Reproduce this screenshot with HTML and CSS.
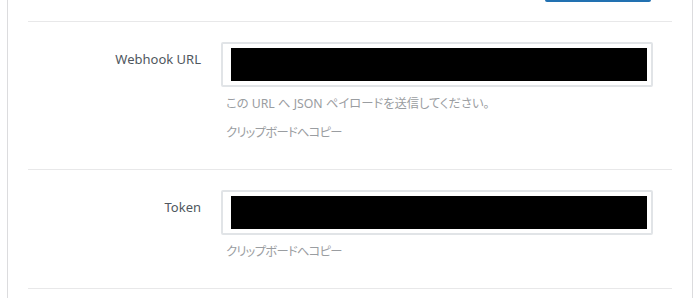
FILE: index.html
```html
<!DOCTYPE html>
<html lang="ja">
<head>
<meta charset="utf-8">
<title>Webhook</title>
<link rel="stylesheet" href="styles.css">
</head>
<body>
<div class="card">
  <div class="toolbar">
    <div class="spacer"></div>
    <div class="tool-field"><span class="btn-edge"></span></div>
  </div>
  <div class="row">
    <div class="label">Webhook URL</div>
    <div class="field">
      <div class="input"><div class="redact"></div></div>
      <p class="help">この URL へ JSON ペイロードを送信してください。</p>
      <p class="copy">クリップボードへコピー</p>
    </div>
  </div>
  <div class="row">
    <div class="label">Token</div>
    <div class="field">
      <div class="input"><div class="redact"></div></div>
      <p class="copy">クリップボードへコピー</p>
    </div>
  </div>
</div>
</body>
</html>
```
FILE: styles.css
```css
html, body {
  margin: 0;
  padding: 0;
  background: #ffffff;
}
body {
  font-family: "Noto Sans", "Noto Sans CJK JP", sans-serif;
  height: 298px;
  overflow: hidden;
}
.card {
  margin-left: 7px;
  border-left: 1px solid #dcdcde;
  border-right: 1px solid #dcdcde;
  padding: 0 20px;
  box-sizing: border-box;
  width: 686px;
  min-height: 298px;
}
.toolbar {
  display: grid;
  grid-template-columns: 173px 432px;
  column-gap: 20px;
  height: 21px;
  border-bottom: 1px solid #e8e8e9;
}
.tool-field {
  display: flex;
  justify-content: flex-end;
  padding-right: 2px;
}
.btn-edge {
  display: block;
  width: 106px;
  height: 2px;
  background: #2271b1;
  border-radius: 0 0 2px 2px;
}
.row {
  display: grid;
  grid-template-columns: 173px 432px;
  column-gap: 20px;
  padding: 20px 0 27px;
  border-bottom: 1px solid #e8e8e9;
}
.label {
  text-align: right;
  font-size: 13px;
  line-height: 20px;
  color: #50575e;
  padding-top: 7px;
}
.field {
  display: flex;
  flex-direction: column;
}
.input {
  height: 45px;
  border: 2px solid #e1e4e7;
  border-radius: 2px;
  box-sizing: border-box;
  padding: 4px 4px 4px 8px;
}
.redact {
  height: 33px;
  background: #000000;
}
.help, .copy {
  margin: 8px 0 0 5px;
  font-size: 12.3px;
  line-height: 18px;
  color: #9a9da1;
  font-feature-settings: "palt" 1;
}
.copy {
  letter-spacing: -0.7px;
}
.help + .copy {
  margin-top: 11px;
}
```
